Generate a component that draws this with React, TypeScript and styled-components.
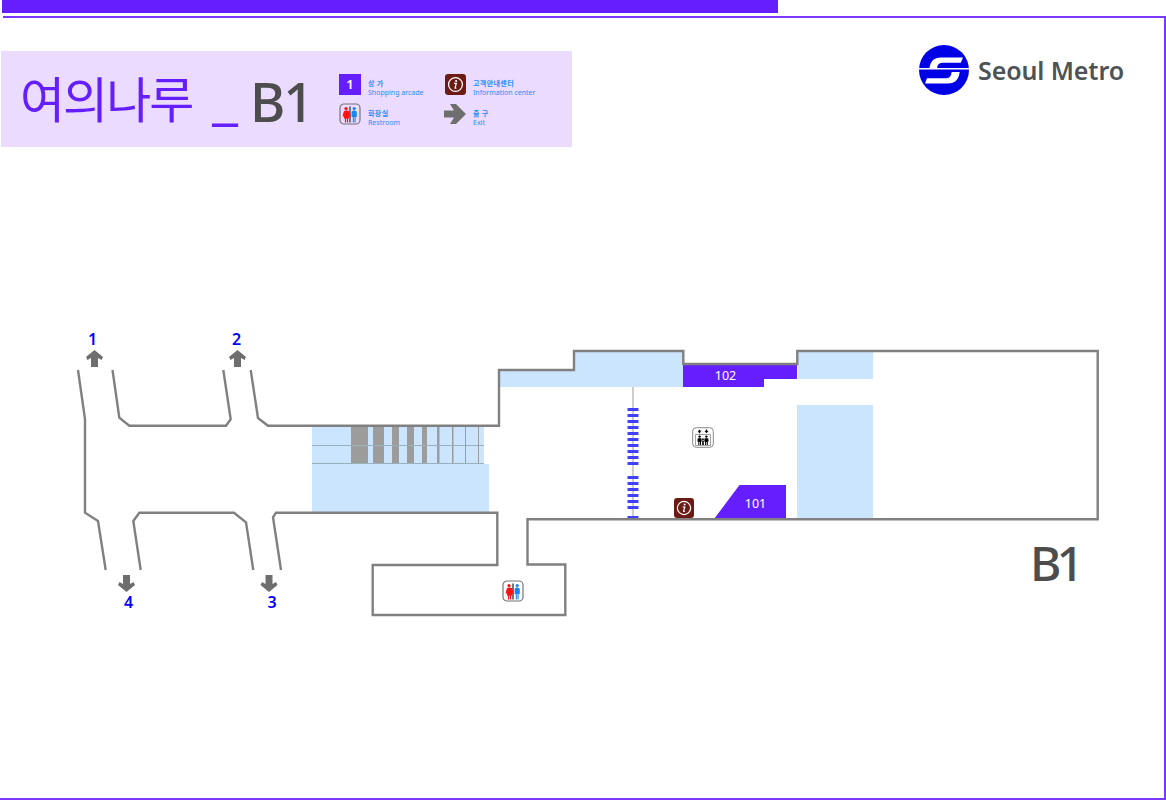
import React from 'react';
import styled, { createGlobalStyle } from 'styled-components';

const PURPLE = '#651fff';
const RULE = '#7a38ff';
const WALL = '#808080';
const HALL = '#cce5ff';
const BROWN = '#6b1a14';
const ARROW = '#6e6e6e';

const GlobalStyle = createGlobalStyle`
  html, body {
    margin: 0;
    padding: 0;
    background: white;
    font-family: "Noto Sans", "Noto Sans CJK KR", sans-serif;
  }
`;

const Page = styled.div`
  width: 1166px;
  height: 801px;
  overflow: hidden;
  background: white;
`;

const TopBar = styled.div`
  width: 776px;
  height: 13px;
  margin: 0 0 3px 2px;
  background: ${PURPLE};
`;

const TopRule = styled.div`
  height: 2px;
  margin-left: 3px;
  background: ${RULE};
`;

const Frame = styled.div`
  box-sizing: border-box;
  height: 782px;
  border-right: 2px solid ${RULE};
  border-bottom: 2px solid ${RULE};
  padding-top: 33px;
`;

const Header = styled.header`
  display: flex;
  justify-content: space-between;
  align-items: flex-start;
  height: 96px;
`;

const Banner = styled.div`
  width: 571px;
  height: 96px;
  margin-left: 1px;
  display: flex;
  align-items: center;
  background: #ebdcff;
`;

const StationTitle = styled.h1`
  width: 338px;
  margin: 0;
  padding-left: 19px;
  box-sizing: border-box;
  display: flex;
  align-items: center;
  font-weight: 400;
  white-space: nowrap;
`;

const StationName = styled.span`
  margin-bottom: 6px;
  font-family: "Noto Sans CJK KR", sans-serif;
  font-size: 49px;
  letter-spacing: -2px;
  color: ${PURPLE};
`;

const Underscore = styled(StationName)`
  margin: 0 0 2px 19px;
  font-weight: 500;
`;

const FloorName = styled.span`
  margin: 4px 0 0 13px;
  font-family: "Noto Sans", sans-serif;
  font-size: 54px;
  font-weight: 500;
  letter-spacing: -2px;
  line-height: 60px;
  color: #4d4d4d;
`;

const Legend = styled.div`
  display: grid;
  grid-template-columns: 105px 1fr;
  row-gap: 9px;
`;

const LegendItem = styled.div`
  display: flex;
  align-items: center;
  gap: 7px;
  height: 21px;
`;

const LegendIconSlot = styled.div`
  width: 22px;
  height: 21px;
  display: flex;
  align-items: center;
  justify-content: center;
  flex: none;
`;

const LegendText = styled.div`
  display: flex;
  flex-direction: column;
  padding-top: 8px;
  font-size: 7px;
  line-height: 9px;
  color: #2b8cff;
  white-space: nowrap;
`;

const LegendKo = styled.span`
  font-family: "Noto Sans CJK KR", sans-serif;
  font-size: 7px;
  font-weight: 700;
  letter-spacing: 0.4px;
`;

const ShopBadge = styled.div`
  width: 22px;
  height: 21px;
  display: flex;
  align-items: center;
  justify-content: center;
  background: ${PURPLE};
  color: white;
  font-size: 13px;
  font-weight: 600;
`;

const Logo = styled.div`
  display: flex;
  align-items: center;
  gap: 8px;
  margin: -6px 40px 0 0;
`;

const LogoText = styled.span`
  font-family: "Noto Sans", sans-serif;
  font-size: 25px;
  font-weight: 600;
  letter-spacing: -0.1px;
  color: #4d5356;
  white-space: nowrap;
`;

const MapArea = styled.main`
  position: relative;
  width: 1164px;
  height: 310px;
  margin-top: 173px;
`;

const MapDrawing = styled.svg`
  display: block;
`;

const Pin = styled.div<{ $x: number; $y: number }>`
  position: absolute;
  left: ${({ $x }) => $x}px;
  top: ${({ $y }) => $y - 320}px;
  line-height: 0;
`;

const ExitLabel = styled.div<{ $x: number; $y: number }>`
  position: absolute;
  left: ${({ $x }) => $x - 10}px;
  top: ${({ $y }) => $y - 330}px;
  width: 20px;
  line-height: 20px;
  text-align: center;
  font-size: 16px;
  font-weight: 600;
  color: #0000ff;
`;

const ShopLabel = styled.div<{ $x: number; $y: number }>`
  position: absolute;
  left: ${({ $x }) => $x - 20}px;
  top: ${({ $y }) => $y - 327}px;
  width: 40px;
  line-height: 16px;
  text-align: center;
  font-size: 12.5px;
  color: white;
`;

const FloorMark = styled.div`
  position: absolute;
  left: 1030px;
  top: 213px;
  font-size: 48px;
  font-weight: 500;
  letter-spacing: -5px;
  line-height: 60px;
  color: #4d4d4d;
`;

const WOMAN = 'M7 7.4c-1.5 0-2.3.7-2.5 2l-1 4.2h1.7l-.5 1.8h1.2V19.4h1.2v-4h.8v4h1.2v-4h1.2l-.5-1.8h1.7l-1-4.2c-.2-1.3-1-2-2.5-2z';
const MAN = 'M15.2 7.4c-1.6 0-2.6.8-2.6 2.1v4.4h1.2v5.5h1.1v-5.3h.6v5.3h1.1v-5.5h1.2V9.5c0-1.3-1-2.1-2.6-2.1z';

const RestroomIcon = ({ background = 'white' }: { background?: string }) => (
  <svg width="22" height="22" viewBox="0 0 22 22">
    <rect x="1" y="1" width="20" height="20" rx="4" fill={background} stroke="#77737c" strokeWidth="1.2" />
    <rect x="10" y="3.5" width="2" height="16" fill="#77737c" />
    <circle cx="7" cy="5.6" r="1.6" fill="#ff0f0f" />
    <path d={WOMAN} fill="#ff0f0f" />
    <circle cx="15.2" cy="5.6" r="1.6" fill="#1a86f0" />
    <path d={MAN} fill="#1a86f0" />
  </svg>
);

const InfoIcon = ({ size }: { size: number }) => (
  <svg width={size} height={size} viewBox="0 0 20 20">
    <rect width="20" height="20" rx="3" fill={BROWN} />
    <circle cx="10" cy="10" r="6.6" fill="none" stroke="white" strokeWidth="1.2" />
    <circle cx="10.6" cy="6.6" r="1" fill="white" />
    <path d="M8.6 9h2.2l-1.2 4.2c-.1.4.3.5 1.2-.2" fill="none" stroke="white" strokeWidth="1.2" />
  </svg>
);

const ExitArrowIcon = () => (
  <svg width="22" height="20" viewBox="0 0 22 20">
    <path d="M0 6.5h10L6 0h6l10 10-10 10H6l4-6.5H0z" fill={ARROW} />
  </svg>
);

const ElevatorIcon = () => (
  <svg width="22" height="21" viewBox="0 0 22 21">
    <rect x=".7" y=".7" width="20.6" height="19.6" rx="3.5" fill="white" stroke="#8a8a8a" />
    <path d="M3.5 7.5V18.5M18.5 7.5V18.5M3.5 7.5H18.5M3.5 18.5H18.5" fill="none" stroke="#8a8a8a" strokeWidth=".8" />
    <path d="M7.5 2.5l2 2.2H8.2v1.6H6.8V4.7H5.5zM14.5 6.3l2-2.2h-1.3V2.5h-1.4v1.6h-1.3z" fill="black" />
    <circle cx="7.6" cy="9.6" r="1.2" fill="black" />
    <circle cx="14.4" cy="9.6" r="1.2" fill="black" />
    <circle cx="11" cy="12.2" r=".9" fill="black" />
    <path d="M5.8 11.2h3.6l.4 3.3H9V18H8v-3H7.3v3h-1v-3.5H5.4zM12.6 11.2h3.6l.4 3.3h-.8V18h-1v-3h-.7v3h-1v-3.5h-.9zM10.2 13.5h1.6V18h-1.6z" fill="black" />
  </svg>
);

const SeoulMetroMark = () => (
  <svg width="52" height="50" viewBox="0 0 52 50">
    <circle cx="26" cy="25" r="25" fill="#0000e6" />
    <path d="M45 12.5H23c-6 0-9.6 2.7-11 8l-.6 2.6H1v1.4h50v-1.4H19l.5-1.8c.6-2.4 2.2-3.6 5-3.6h18.3z" fill="white" />
    <path d="M7 38.5h23c6 0 9.4-2.7 11-8l.7-3.5h-8l-.6 2.5c-.6 2.4-2.2 3.8-5 3.8H9z" fill="white" />
  </svg>
);

const MOVE_UP = (x: number) =>
  `M${x} 350l8.5 7-1.5 3-3.5-2V367h-7v-9l-3.5 2-1.5-3z`;
const MOVE_DOWN = (x: number) =>
  `M${x} 592l-8.5-7 1.5-3 3.5 2V575h7v9l3.5-2 1.5 3z`;

const WALLS = [
  '78,370 85,419 85,512.7 98,521 105.7,570',
  '112.5,370 119.3,417.7 129.3,425.7 226,425.7 230.7,419.3 223.3,370',
  '250.7,370 258,418 268,425.7 499,425.7 499,370 574,370 574,351 683.3,351 683.3,364 797.3,364 797.3,351 1097.7,351 1097.7,519.3 527.5,519.3 527.5,564.5 565.3,564.5 565.3,615 372.7,615 372.7,565 497.3,565 497.3,512.7 276,512.7 273,517.3 281,570',
  '140.7,570 133.3,521 139.3,512.7 234,512.7 246,522.3 253.3,570',
];

const GRAY_BARS: [number, number][] = [
  [351, 17], [373, 11], [392, 7], [407, 7], [422, 5], [437, 2.5], [452, 1.5], [465, 1], [478, 1],
];

const STAIR_STEPS = [408, 414, 420, 426, 432, 438, 444, 450, 456, 462, 476, 482, 488, 494, 500, 506, 516];

const LEGEND = [
  { ko: '상 가', en: 'Shopping arcade', icon: <ShopBadge>1</ShopBadge> },
  { ko: '고객안내센터', en: 'Information center', icon: <InfoIcon size={21} /> },
  { ko: '화장실', en: 'Restroom', icon: <RestroomIcon background="#ebdcff" /> },
  { ko: '출 구', en: 'Exit', icon: <ExitArrowIcon /> },
];

export default function App() {
  return (
    <Page>
      <GlobalStyle />
      <TopBar />
      <TopRule />
      <Frame>
        <Header>
          <Banner>
            <StationTitle>
              <StationName>여의나루</StationName>
              <Underscore>_</Underscore>
              <FloorName>B1</FloorName>
            </StationTitle>
            <Legend>
              {LEGEND.map((item) => (
                <LegendItem key={item.en}>
                  <LegendIconSlot>{item.icon}</LegendIconSlot>
                  <LegendText>
                    <LegendKo>{item.ko}</LegendKo>
                    <span>{item.en}</span>
                  </LegendText>
                </LegendItem>
              ))}
            </Legend>
          </Banner>
          <Logo>
            <SeoulMetroMark />
            <LogoText>Seoul Metro</LogoText>
          </Logo>
        </Header>
        <MapArea>
          <MapDrawing width="1164" height="310" viewBox="0 320 1164 310">
            {/* halls */}
            <path d="M312 426H484V464H489V512H312z" fill={HALL} />
            <path d="M500 370H574V352H683V387H500z" fill={HALL} />
            <rect x="798" y="352" width="75" height="27" fill={HALL} />
            <rect x="797" y="405" width="76" height="114" fill={HALL} />
            {/* ticket gates */}
            {GRAY_BARS.map(([x, w]) => (
              <rect key={x} x={x} y="426" width={w} height="38" fill="#9c9c9c" />
            ))}
            <path d="M312 445.5H484M312 463.5H484" stroke="#9ab0bd" strokeWidth="1" />
            {/* shops */}
            <path d="M683 365H797V379H764V387H683z" fill={PURPLE} />
            <path d="M714 519L739.5 485H786V519z" fill={PURPLE} />
            {/* stairs */}
            <path d="M633 387V518" stroke="#bdbdbd" strokeWidth="1.5" />
            {STAIR_STEPS.map((y) => (
              <rect key={y} x="627.5" y={y} width="11" height="3" fill="#4040ff" />
            ))}
            {WALLS.map((points) => (
              <polyline key={points} points={points} fill="none" stroke={WALL} strokeWidth="2.4" />
            ))}
            {/* exit arrows */}
            <path d={MOVE_UP(94.5)} fill={ARROW} />
            <path d={MOVE_UP(237.5)} fill={ARROW} />
            <path d={MOVE_DOWN(126.5)} fill={ARROW} />
            <path d={MOVE_DOWN(269)} fill={ARROW} />
          </MapDrawing>
          <ExitLabel $x={92.5} $y={339}>1</ExitLabel>
          <ExitLabel $x={236.5} $y={339}>2</ExitLabel>
          <ExitLabel $x={272} $y={602}>3</ExitLabel>
          <ExitLabel $x={128.5} $y={602}>4</ExitLabel>
          <ShopLabel $x={725.5} $y={375}>102</ShopLabel>
          <ShopLabel $x={755.5} $y={503}>101</ShopLabel>
          <Pin $x={674} $y={498}><InfoIcon size={20} /></Pin>
          <Pin $x={691.5} $y={427}><ElevatorIcon /></Pin>
          <Pin $x={501.5} $y={580}><RestroomIcon /></Pin>
          <FloorMark>B1</FloorMark>
        </MapArea>
      </Frame>
    </Page>
  );
}
